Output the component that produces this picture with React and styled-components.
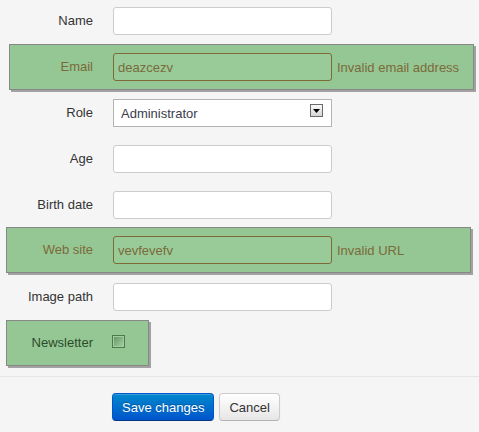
import React from "react";
import styled, { createGlobalStyle, css } from "styled-components";

const GlobalStyle = createGlobalStyle`
    body {
        margin: 0;
        background: #f5f5f5;
        font-family: "Liberation Sans", Arial, sans-serif;
        font-size: 13px;
        color: #333;
    }
`;

/* === FORM LAYOUT === */
const Form = styled.form`
    margin: -2px 0 0 0;
    width: 479px;
`;

const Row = styled.div`
    display: flex;
    align-items: center;
    height: 46px;
    box-sizing: border-box;

    ${p => p.$flag && css`
        margin-left: ${p.$x}px;
        margin-top: ${p.$dy}px;
        margin-bottom: ${-p.$dy}px;
        width: ${p.$w}px;
        background: #95c794;
        border: 1px solid #878787;
        box-shadow: 2px 2px 0 #a2a2a2;
        color: ${p.$tone || "#7b6a3a"};
    `}
`;

const Label = styled.label`
    flex: none;
    width: ${p => 93 - (p.$inset || 0)}px;
    margin-right: 20px;
    text-align: right;
    line-height: 18px;
`;

const Input = styled.input`
    box-sizing: border-box;
    width: 219px;
    height: 28px;
    margin: 0;
    padding: 4px;
    font: 13px "Liberation Sans", Arial, sans-serif;
    color: #555;
    background: #fff;
    border: 1px solid #ccc;
    border-radius: 3px;
    outline: none;

    ${p => p.$error && css`
        background: #99cb98;
        border-color: #7e6a36;
        color: #7b6a3a;
    `}
`;

const Help = styled.span`
    margin-left: 5px;
`;

/* select with windows-style arrow */
const SelectWrap = styled.div`
    position: relative;
    width: 219px;
    height: 28px;
`;

const Select = styled.select`
    appearance: none;
    box-sizing: border-box;
    width: 100%;
    height: 100%;
    margin: 0;
    padding: 0 0 0 7px;
    font: 13px "Liberation Sans", Arial, sans-serif;
    color: #3c3c4c;
    background: #fff;
    border: 1px solid #b4b4b4;
    border-radius: 0;
`;

const Arrow = styled.span`
    position: absolute;
    left: 197px;
    top: 5px;
    width: 13px;
    height: 13px;
    box-sizing: border-box;
    border: 1px solid #6a6a6a;
    background: linear-gradient(#fafafa, #d4d4d4);
    display: flex;
    align-items: center;
    justify-content: center;
    pointer-events: none;
`;

const Check = styled.span`
    width: 13px;
    height: 13px;
    margin: -3px 0 0 -1px;
    box-sizing: border-box;
    border: 1px solid #4c7a4b;
    box-shadow: inset 0 0 0 1px #a3cda2;
    background: linear-gradient(135deg, #5f945e, #a9d0a8);
`;

/* === ACTIONS === */
const Actions = styled.div`
    display: flex;
    gap: 5px;
    margin-top: 10px;
    padding: 16px 0 0 112px;
    border-top: 1px solid #e5e5e5;
`;

const Button = styled.button`
    height: 28px;
    padding: 0 9px;
    font: 13px "Liberation Sans", Arial, sans-serif;
    border-radius: 4px;
    cursor: pointer;
    color: #333;
    background: linear-gradient(#ffffff, #e6e6e6);
    border: 1px solid #cccccc;
    border-bottom-color: #b3b3b3;
    box-shadow: inset 0 1px 0 rgba(255,255,255,.2), 0 1px 2px rgba(0,0,0,.05);

    ${p => p.$primary && css`
        color: #fff;
        background: linear-gradient(#0088cc, #0055cc);
        border-color: #0055cc #0055cc #003580;
        text-shadow: 0 -1px 0 rgba(0,0,0,.25);
    `}
`;

function App() {
    return (
        <>
            <GlobalStyle />
            <Form onSubmit={e => e.preventDefault()}>
                <Row>
                    <Label>Name</Label>
                    <Input />
                </Row>
                <Row $flag $x={9} $w={465} $dy={0}>
                    <Label $inset={10}>Email</Label>
                    <Input $error defaultValue="deazcezv" />
                    <Help>Invalid email address</Help>
                </Row>
                <Row>
                    <Label>Role</Label>
                    <SelectWrap>
                        <Select defaultValue="admin">
                            <option value="admin">Administrator</option>
                            <option value="user">User</option>
                        </Select>
                        <Arrow>
                            <svg width="7" height="4" viewBox="0 0 7 4">
                                <path d="M0 0h7L3.5 4z" fill="#000" />
                            </svg>
                        </Arrow>
                    </SelectWrap>
                </Row>
                <Row>
                    <Label>Age</Label>
                    <Input />
                </Row>
                <Row>
                    <Label>Birth date</Label>
                    <Input />
                </Row>
                <Row $flag $x={6} $w={465} $dy={-1}>
                    <Label $inset={7}>Web site</Label>
                    <Input $error defaultValue="vevfevefv" />
                    <Help>Invalid URL</Help>
                </Row>
                <Row>
                    <Label>Image path</Label>
                    <Input />
                </Row>
                <Row $flag $x={6} $w={143} $dy={0} $tone="#2b4b2b">
                    <Label $inset={7}>Newsletter</Label>
                    <Check />
                </Row>
                <Actions>
                    <Button $primary type="submit">Save changes</Button>
                    <Button type="button">Cancel</Button>
                </Actions>
            </Form>
        </>
    );
}

export default App;
